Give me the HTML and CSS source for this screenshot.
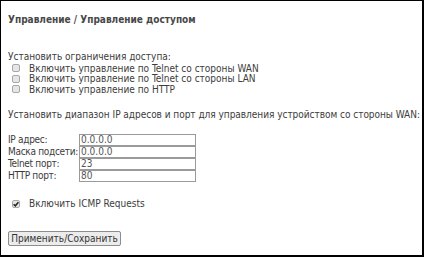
FILE: index.html
```html
<!DOCTYPE html>
<html lang="ru">
<head>
    <meta charset="UTF-8">
    <title>Управление доступом</title>
    <link rel="stylesheet" href="styles.css">
</head>
<body>
    <div class="frame">
        <div class="title">Управление / Управление доступом</div>

        <div class="section-label">Установить ограничения доступа:</div>
        <div class="check-list">
            <label class="check-row"><span class="box"></span>Включить управление по Telnet со стороны WAN</label>
            <label class="check-row"><span class="box"></span>Включить управление по Telnet со стороны LAN</label>
            <label class="check-row"><span class="box"></span>Включить управление по HTTP</label>
        </div>

        <div class="section-label range-label">Установить диапазон IP адресов и порт для управления устройством со стороны WAN:</div>
        <div class="field-grid">
            <span class="field-name">IP адрес:</span><input class="field" type="text" value="0.0.0.0">
            <span class="field-name">Маска подсети:</span><input class="field" type="text" value="0.0.0.0">
            <span class="field-name">Telnet порт:</span><input class="field" type="text" value="23">
            <span class="field-name">HTTP порт:</span><input class="field" type="text" value="80">
        </div>

        <label class="check-row icmp"><span class="box checked"><svg viewBox="0 0 8 8" width="8" height="8"><path d="M1.6 4.2 L3.3 5.8 L6.4 2.2" fill="none" stroke="#222" stroke-width="1.5"/></svg></span>Включить ICMP Requests</label>

        <div class="actions">
            <button class="save-btn" type="button">Применить/Сохранить</button>
        </div>
    </div>
</body>
</html>
```

FILE: styles.css
```css
/* page */
body {
    margin: 0;
    padding: 0;
    background-color: #fff;
    font-family: "DejaVu Sans Condensed", "DejaVu Sans", Verdana, sans-serif;
    font-size: 10px;
    color: #3c3c3c;
}
.frame {
    box-sizing: border-box;
    height: 257px;
    border-top: 1px solid #000;
    border-left: 1px solid #000;
    border-right: 2px solid #000;
    border-bottom: 2px solid #000;
    padding: 13px 7px 0 7px;
}
.title {
    font-weight: bold;
    line-height: 12px;
    color: #474747;
    margin-bottom: 25px;
}
.section-label {
    line-height: 12px;
    white-space: nowrap;
}
.check-list {
    display: flex;
    flex-direction: column;
}
.check-row {
    display: flex;
    align-items: center;
    height: 10.5px;
    white-space: nowrap;
}
.box {
    box-sizing: border-box;
    width: 8px;
    height: 8px;
    margin: 0 9px 0 4px;
    border: 1px solid #a8a8a8;
    border-radius: 2px;
    background-color: #e6e6e6;
    display: flex;
}
.box svg {
    margin: -1px;
}
.range-label {
    margin-top: 14px;
    letter-spacing: -0.03px;
}
.field-grid {
    display: grid;
    grid-template-columns: 71px 117px;
    grid-auto-rows: 12px;
    margin-top: 13px;
    line-height: 12px;
}
.field-name {
    white-space: nowrap;
    letter-spacing: -0.3px;
}
.field {
    box-sizing: border-box;
    width: 117px;
    height: 12px;
    margin: 0;
    border: 1px solid #9a9a9a;
    padding: 0 1px;
    font-family: inherit;
    font-size: 10px;
    color: #555;
    outline: none;
}
.icmp {
    margin-top: 17px;
}
.actions {
    margin-top: 22px;
}
.save-btn {
    height: 15px;
    width: 113px;
    padding: 0;
    font-family: inherit;
    font-size: 10px;
    color: #333;
    background-color: #ececec;
    border: 1px solid #8c8c8c;
    border-radius: 2px;
}
```
